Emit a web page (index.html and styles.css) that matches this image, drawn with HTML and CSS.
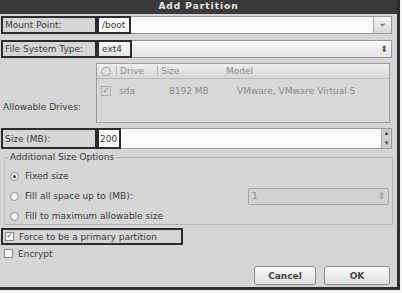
FILE: index.html
```html
<!DOCTYPE html>
<html lang="en">
<head>
    <meta charset="UTF-8">
    <title>Add Partition</title>
    <link rel="stylesheet" href="styles.css">
</head>
<body>
    <div class="dialog">
        <div class="titlebar">Add Partition</div>
        <div class="content">
            <div class="row r-mount">
                <div class="label boxed">Mount Point:</div>
                <div class="combo white">
                    <span class="val boxed">/boot</span>
                    <span class="fill"></span>
                    <span class="drop">&#x2304;</span>
                </div>
            </div>

            <div class="row r-fs">
                <div class="label boxed">File System Type:</div>
                <div class="combo grad">
                    <span class="val boxed">ext4</span>
                    <span class="fill"></span>
                    <span class="updown">&#x2B0D;</span>
                </div>
            </div>

            <div class="row r-drives">
                <div class="label plain">Allowable Drives:</div>
                <div class="table">
                    <div class="thead">
                        <span class="c-sel">&#9711;</span>
                        <span class="c-drive">Drive</span>
                        <span class="c-size">Size</span>
                        <span class="c-model">Model</span>
                    </div>
                    <div class="trow">
                        <span class="c-sel"><span class="tick">&#10003;</span></span>
                        <span class="c-drive">sda</span>
                        <span class="c-size">8192 MB</span>
                        <span class="c-model">VMware, VMware Virtual S</span>
                    </div>
                </div>
            </div>

            <div class="row r-size">
                <div class="label boxed">Size (MB):</div>
                <div class="combo white spin">
                    <span class="val boxed">200</span>
                    <span class="fill"></span>
                    <span class="arrows"><i>&#9652;</i><i>&#9662;</i></span>
                </div>
            </div>

            <fieldset class="options">
                <legend>Additional Size Options</legend>
                <div class="opt"><span class="radio on"></span>Fixed size</div>
                <div class="opt">
                    <span class="radio"></span>Fill all space up to (MB):
                    <span class="spin-off"><span>1</span><span class="arr">&#8661;</span></span>
                </div>
                <div class="opt"><span class="radio"></span>Fill to maximum allowable size</div>
            </fieldset>

            <div class="check boxed primary"><span class="cbox">&#10003;</span>Force to be a primary partition</div>
            <div class="check"><span class="cbox"></span>Encrypt</div>

            <div class="buttons">
                <button class="cancel">Cancel</button>
                <button class="ok">OK</button>
            </div>
        </div>
    </div>
</body>
</html>
```

FILE: styles.css
```css
body {
    margin: 0;
    background: #f2f2f2;
    font-family: "DejaVu Sans", sans-serif;
    font-size: 9px;
    color: #3a3a3a;
}
.dialog {
    width: 397px;
    height: 287px;
    background: #d5d5d5;
    border-right: 3px solid #2e2e2e;
    border-bottom: 3px solid #2e2e2e;
    display: flex;
    flex-direction: column;
}
.titlebar {
    height: 14px;
    line-height: 13px;
    background: #3a3a3a;
    color: #e8e8e8;
    font-weight: bold;
    font-size: 9px;
    letter-spacing: 1px;
    text-align: center;
}
.content {
    flex: 1;
    display: flex;
    flex-direction: column;
    padding: 2px 5px 0 1px;
}
.boxed {
    border: 2px solid #2c2c2c;
    box-sizing: border-box;
}
.row {
    display: flex;
}
.label {
    width: 96px;
    flex: none;
    padding-left: 2px;
    box-sizing: border-box;
    display: flex;
    align-items: center;
    white-space: nowrap;
}
.r-mount { height: 18px; }
.r-fs { height: 18px; margin-top: 6px; }
.r-drives { height: 60px; margin-top: 5px; }
.r-size { height: 21px; margin-top: 5px; }
.label.plain {
    align-items: flex-start;
    padding-top: 39px;
}
.combo {
    flex: 1;
    display: flex;
    border: 1px solid #9a9a9a;
    border-left: none;
}
.combo.white { background: #fbfbfb; }
.combo.grad { background: linear-gradient(#fafafa, #e2e2e2); }
.combo .val {
    display: flex;
    align-items: center;
    padding: 0 3px;
    margin-top: -1px;
    margin-bottom: -1px;
    white-space: nowrap;
}
.r-mount .val { width: 34px; }
.r-fs .val { width: 35px; }
.r-size .val { width: 24px; padding: 0 1px; }
.fill { flex: 1; }
.drop {
    width: 17px;
    border-left: 1px solid #a8a8a8;
    background: linear-gradient(#f4f4f4, #d8d8d8);
    text-align: center;
    line-height: 11px;
    font-size: 11px;
    color: #555;
}
.updown {
    width: 14px;
    text-align: center;
    line-height: 17px;
    font-size: 9px;
    color: #555;
}
.arrows {
    width: 9px;
    background: #cfcfcf;
    border-left: 1px solid #aaa;
    display: flex;
    flex-direction: column;
    justify-content: space-between;
    align-items: center;
    font-size: 7px;
    line-height: 9px;
    color: #444;
}
.arrows i { font-style: normal; }
.table {
    width: 292px;
    margin-left: -1px;
    border: 1px solid #9c9c9c;
    background: #d8d8d8;
    color: #8a8a8a;
}
.thead, .trow {
    display: flex;
    align-items: center;
}
.thead {
    height: 14px;
    background: linear-gradient(#eeeeee, #d6d6d6);
    border-bottom: 1px solid #b8b8b8;
}
.trow {
    height: 19px;
    margin-top: 2px;
}
.c-sel { width: 19px; padding-left: 4px; box-sizing: border-box; }
.c-drive { width: 37px; padding-left: 3px; }
.c-size { width: 62px; padding-left: 3px; }
.c-model { flex: 1; padding-left: 3px; }
.thead .c-drive, .thead .c-size { border-left: 1px solid #b4b4b4; }
.trow .c-size { padding-left: 13px; width: 52px; }
.trow .c-model { padding-left: 16px; }
.tick {
    display: inline-block;
    width: 8px;
    height: 8px;
    border: 1px solid #aaa;
    line-height: 8px;
    font-size: 8px;
    text-align: center;
    color: #777;
}
.options {
    margin: 3px 0 0 3px;
    padding: 4px 0 0 3px;
    width: 389px;
    box-sizing: border-box;
    height: 73px;
    border: 1px solid #b3b3b3;
    border-left-color: #c6c6c6;
}
.options legend {
    padding: 0 2px;
    margin-left: 0;
    color: #3a3a3a;
}
.opt {
    height: 20px;
    display: flex;
    align-items: center;
    white-space: nowrap;
}
.radio {
    width: 7px;
    height: 7px;
    border-radius: 50%;
    border: 1px solid #8d8d8d;
    background: #f6f6f6;
    margin: 0 6px 0 2px;
    position: relative;
}
.radio.on::after {
    content: "";
    position: absolute;
    left: 2px;
    top: 2px;
    width: 3px;
    height: 3px;
    border-radius: 50%;
    background: #333;
}
.spin-off {
    margin-left: auto;
    margin-right: 3px;
    width: 141px;
    height: 17px;
    border: 1px solid #a4a4a4;
    border-radius: 2px;
    box-sizing: border-box;
    background: #d2d2d2;
    display: flex;
    align-items: center;
    justify-content: space-between;
    padding: 0 3px;
    color: #8c8c8c;
}
.spin-off .arr { font-size: 9px; }
.check {
    height: 17px;
    display: flex;
    align-items: center;
    white-space: nowrap;
    padding-left: 3px;
}
.check.primary {
    width: 182px;
    margin-top: 3px;
    padding-left: 2px;
}
.cbox {
    width: 7px;
    height: 7px;
    border: 1px solid #8a8a8a;
    background: #f8f8f8;
    margin-right: 5px;
    line-height: 7px;
    font-size: 7px;
    text-align: center;
    color: #333;
}
.buttons {
    margin-top: auto;
    margin-bottom: 2px;
    padding-right: 2px;
    display: flex;
    justify-content: flex-end;
    gap: 8px;
}
.buttons button {
    height: 19px;
    font-family: "DejaVu Sans", sans-serif;
    font-size: 9px;
    font-weight: bold;
    color: #444;
    border: 1px solid #8c8c8c;
    border-radius: 3px;
    background: linear-gradient(#fcfcfc, #dcdcdc);
    padding: 0;
}
.cancel { width: 62px; }
.ok { width: 66px; }
```
